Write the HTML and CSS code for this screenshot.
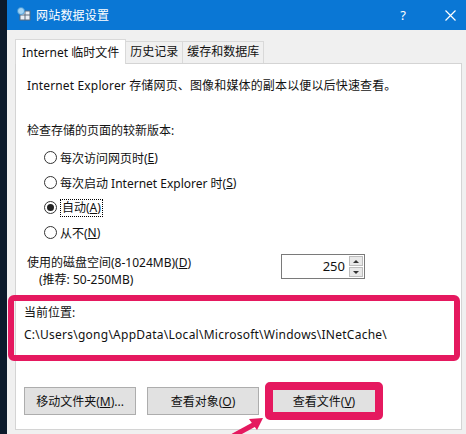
FILE: index.html
```html
<!DOCTYPE html>
<html lang="zh-CN">
<head>
    <meta charset="UTF-8">
    <title>网站数据设置</title>
    <link rel="stylesheet" href="styles.css">
</head>
<body>
    <div class="window">
        <div class="titlebar">
            <svg class="app-icon" width="14" height="14" viewBox="0 0 14 14">
                <rect x="3" y="4" width="10" height="9" fill="#e8eef5" stroke="#5a6b7d" stroke-width="1"/>
                <line x1="3" y1="8" x2="13" y2="8" stroke="#5a6b7d"/>
                <line x1="8" y1="4" x2="8" y2="13" stroke="#5a6b7d"/>
                <circle cx="4" cy="4" r="3.5" fill="#9fd3f5" stroke="#3a8fd0" stroke-width="0.8"/>
            </svg>
            <span class="title">网站数据设置</span>
            <div class="controls">
                <span class="help">?</span>
                <span class="close">
                    <svg width="11" height="11" viewBox="0 0 11 11">
                        <path d="M0.5 0.5 L10.5 10.5 M10.5 0.5 L0.5 10.5" stroke="#fff" stroke-width="1.2"/>
                    </svg>
                </span>
            </div>
        </div>

        <div class="tabs">
            <div class="tab tab-active">Internet 临时文件</div>
            <div class="tab">历史记录</div>
            <div class="tab">缓存和数据库</div>
        </div>

        <div class="panel">
            <p class="intro">Internet Explorer 存储网页、图像和媒体的副本以便以后快速查看。</p>

            <p class="heading">检查存储的页面的较新版本:</p>
            <div class="radios">
                <div class="radio-row"><span class="radio"></span>每次访问网页时(<u>E</u>)</div>
                <div class="radio-row"><span class="radio"></span>每次启动 Internet Explorer 时(<u>S</u>)</div>
                <div class="radio-row"><span class="radio radio-on"></span><span class="focus">自动(<u>A</u>)</span></div>
                <div class="radio-row"><span class="radio"></span>从不(<u>N</u>)</div>
            </div>

            <div class="disk">
                <div class="disk-text">
                    <div>使用的磁盘空间(8-1024MB)(<u>D</u>)</div>
                    <div class="disk-hint">(推荐: 50-250MB)</div>
                </div>
                <div class="spin">
                    <span class="spin-value">250</span>
                    <div class="spin-buttons">
                        <span class="spin-btn"><i class="tri-up"></i></span>
                        <span class="spin-btn"><i class="tri-down"></i></span>
                    </div>
                </div>
            </div>

            <div class="location">
                <div>当前位置:</div>
                <div class="path">C:\Users\gong\AppData\Local\Microsoft\Windows\INetCache\</div>
            </div>

            <div class="buttons">
                <button class="btn">移动文件夹(<u>M</u>)...</button>
                <button class="btn">查看对象(<u>O</u>)</button>
                <span class="mark"><button class="btn btn-marked">查看文件(<u>V</u>)</button></span>
            </div>
        </div>

        <svg class="arrow" width="40" height="18" viewBox="0 0 40 18">
            <path d="M4 18 L26 6" stroke="#e5195f" stroke-width="5"/>
            <path d="M20 1 L34 0 L28 12 Z" fill="#e5195f"/>
        </svg>
    </div>
</body>
</html>
```

FILE: styles.css
```css
body {
    margin: 0;
    width: 466px;
    height: 434px;
    overflow: hidden;
    background-color: #0c1a2b;
    font-family: "Noto Sans", "Noto Sans CJK SC", sans-serif;
    font-size: 12px;
    color: #111;
}
.window {
    position: relative;
    margin-left: 7px;
    height: 434px;
    background-color: #f0f0f0;
    display: flex;
    flex-direction: column;
}
.titlebar {
    height: 30px;
    background-color: #0a77d5;
    display: flex;
    align-items: center;
    padding-left: 10px;
    color: #fff;
}
.app-icon {
    margin-right: 5px;
    margin-top: -2px;
}
.title {
    font-size: 12px;
    letter-spacing: 0.2px;
}
.controls {
    margin-left: auto;
    display: flex;
    align-items: center;
}
.help {
    width: 24px;
    text-align: center;
    font-size: 13px;
}
.close {
    width: 24px;
    margin-left: 23px;
    margin-right: 4px;
    display: flex;
    justify-content: center;
}
.tabs {
    display: flex;
    align-items: flex-end;
    padding-left: 8px;
    margin-top: 9px;
    height: 24px;
}
.tab {
    height: 21px;
    line-height: 20px;
    padding: 0 4px;
    border: 1px solid #d9d9d9;
    border-bottom: none;
    border-left: none;
    background-color: #f0f0f0;
}
.tab-active {
    height: 24px;
    line-height: 25px;
    padding: 0 6px;
    border-left: 1px solid #d9d9d9;
    background-color: #fff;
    margin-bottom: -1px;
    position: relative;
    z-index: 1;
}
.panel {
    box-sizing: border-box;
    margin-left: 8px;
    width: 447px;
    flex: 1;
    margin-bottom: 4px;
    border: 1px solid #d4d4d4;
    background-color: #fff;
    padding: 0 11px;
}
p {
    margin: 0;
    line-height: 16px;
}
.intro {
    margin-top: 14px;
    letter-spacing: 0.15px;
}
.heading {
    margin-top: 29px;
}
.radios {
    margin-top: 6px;
    padding-left: 17px;
}
.radio-row {
    height: 25px;
    display: flex;
    align-items: center;
}
.radio {
    width: 11px;
    height: 11px;
    border: 1px solid #333;
    border-radius: 50%;
    background-color: #fff;
    margin-right: 3px;
    position: relative;
}
.radio-on::after {
    content: "";
    position: absolute;
    left: 2px;
    top: 2px;
    width: 7px;
    height: 7px;
    border-radius: 50%;
    background-color: #222;
}
.focus {
    border: 1px dotted #000;
    padding: 0 1px;
    line-height: 16px;
}
.disk {
    display: flex;
    margin-top: 9px;
    line-height: 17px;
}
.disk-text {
    width: 254px;
}
.disk-hint {
    padding-left: 12px;
}
.spin {
    width: 82px;
    height: 23px;
    border: 1px solid #7a7a7a;
    display: flex;
    align-items: center;
}
.spin-value {
    flex: 1;
    text-align: right;
    padding-right: 4px;
    font-size: 13px;
}
.spin-buttons {
    display: flex;
    flex-direction: column;
    gap: 1px;
    margin-right: 1px;
}
.spin-btn {
    width: 14px;
    height: 10px;
    background-color: #e8e8e8;
    border: 1px solid #bdbdbd;
    box-sizing: border-box;
    display: flex;
    align-items: center;
    justify-content: center;
}
.tri-up {
    border-left: 3px solid transparent;
    border-right: 3px solid transparent;
    border-bottom: 3px solid #333;
}
.tri-down {
    border-left: 3px solid transparent;
    border-right: 3px solid transparent;
    border-top: 3px solid #333;
}
.location {
    margin: 7px -10px 0 -19px;
    border: 6px solid #e5195f;
    border-radius: 6px;
    padding: 4px 10px 12px 10px;
    line-height: 16px;
}
.path {
    margin-top: 6px;
    letter-spacing: 0.25px;
}
.buttons {
    display: flex;
    align-items: center;
    margin-top: 21px;
    margin-left: -3px;
    height: 38px;
}
.btn {
    width: 112px;
    height: 28px;
    font-family: "Noto Sans", "Noto Sans CJK SC", sans-serif;
    font-size: 12px;
    color: #111;
    background-color: #e1e1e1;
    border: 1px solid #adadad;
    margin-right: 11px;
    padding: 0;
}
.btn + .btn {
    margin-right: 6px;
}
.mark {
    display: flex;
    border: 8px solid #e5195f;
    border-radius: 5px;
    height: 22px;
}
.btn-marked {
    width: 102px;
    height: 22px;
    border: none;
    margin: 0;
    background-color: #e1e1e1;
}
.arrow {
    position: absolute;
    left: 222px;
    top: 418px;
}
```
